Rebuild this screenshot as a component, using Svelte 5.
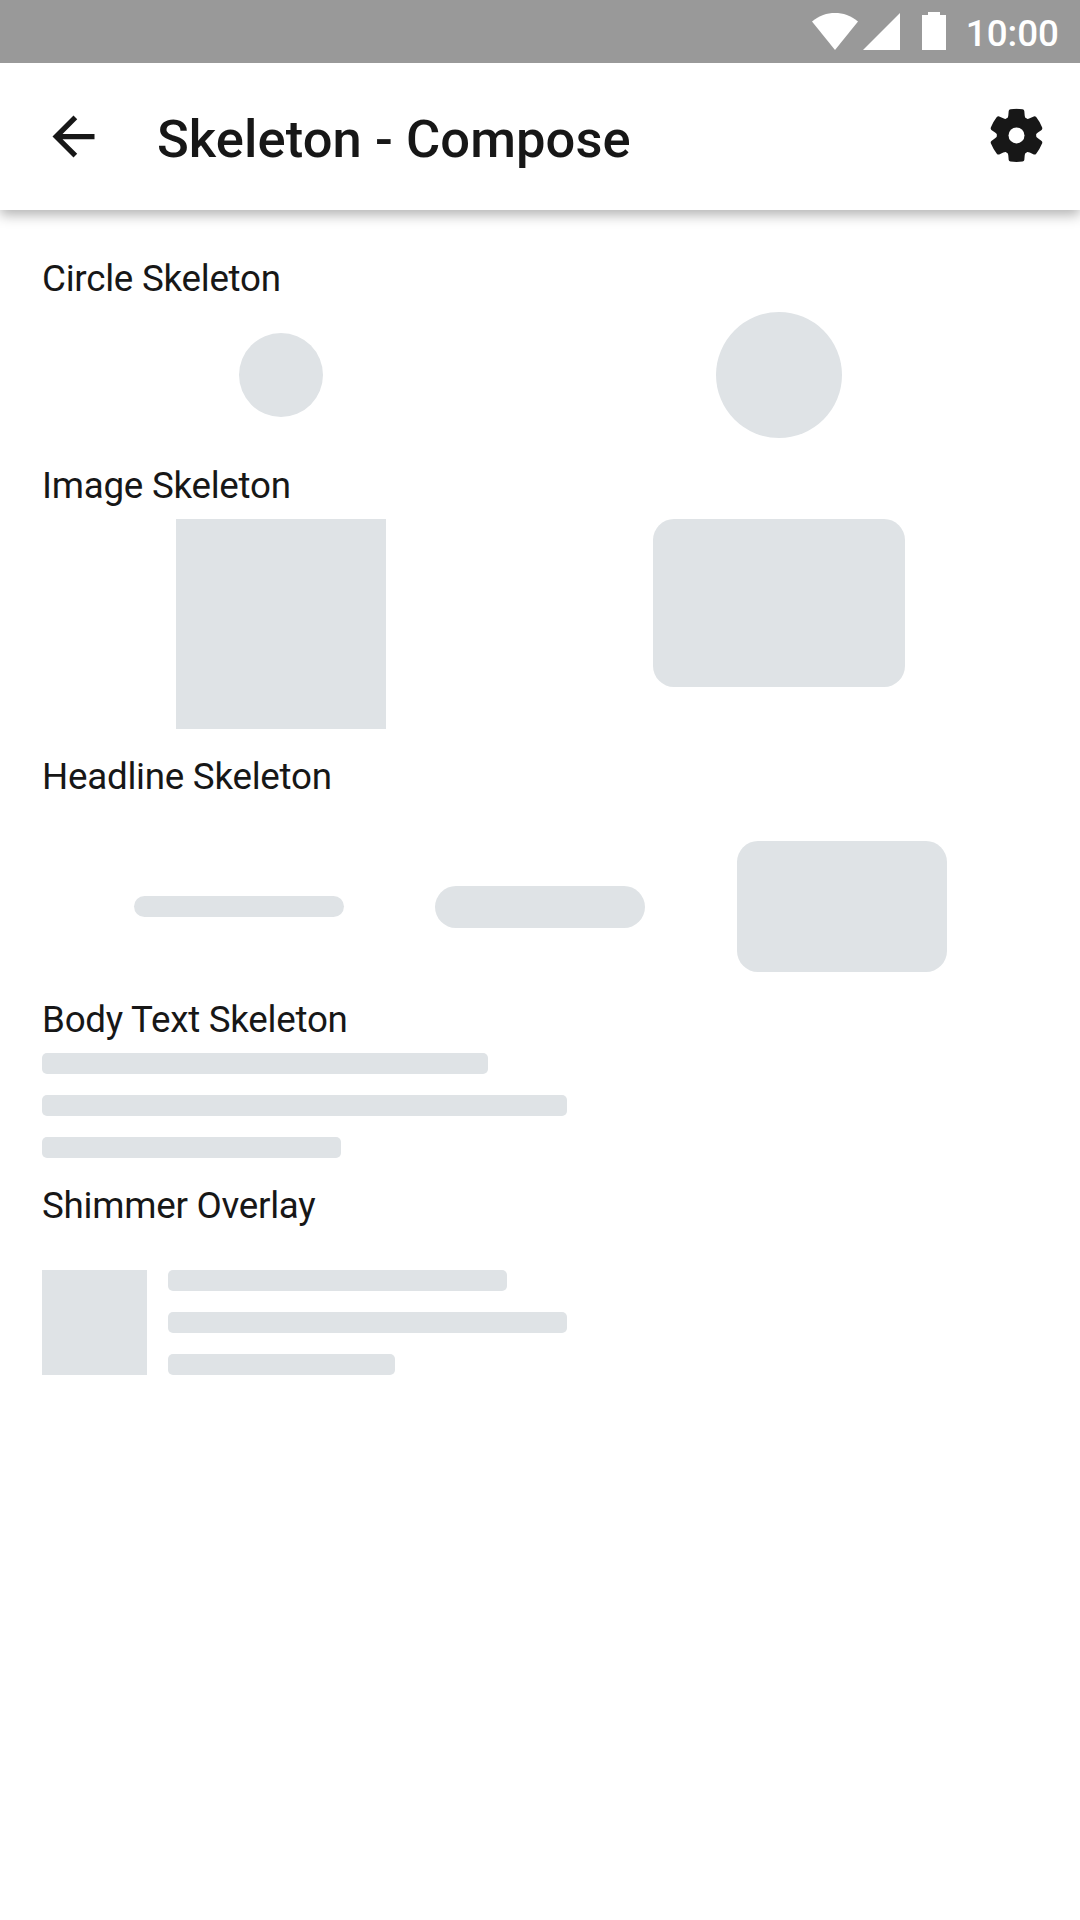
<script>
  const bodyLines = [446, 525, 299];
  const shimmerLines = [339, 399, 227];
</script>

<div class="screen">
  <div class="status">
    <svg class="wifi" viewBox="0 0 46 37"><path d="M0 8.500C7 2.500 15 0 23 0s16 2.500 23 8.500L23 37z" /></svg>
    <svg class="signal" viewBox="0 0 37 37"><path d="M37 0v37H0z" /></svg>
    <svg class="battery" viewBox="0 0 24 38"><path d="M6 0h12v3h6v35H0V3h6z" /></svg>
    <span class="clock">10:00</span>
  </div>

  <header>
    <svg class="back" viewBox="0 0 24 24"><path d="M20 11H7.830l5.590-5.590L12 4l-8 8 8 8 1.410-1.410L7.830 13H20v-2z" /></svg>
    <h1>Skeleton - Compose</h1>
    <svg class="gear" viewBox="-27.500 -27.400 54 54">
      <defs>
        <mask id="hub">
          <rect x="-27" y="-27" width="54" height="54" fill="#fff" />
          <circle r="8" fill="#000" />
        </mask>
      </defs>
      <g mask="url(#hub)">
        <circle r="19.700" />
        {#each [0, 60, 120, 180, 240, 300] as angle}
          <path
            transform="rotate({angle})"
            d="M-12 -15.500Q-8.400 -16.500 -8.200 -20L-7.800 -24.500Q-7.600 -25.900 -6 -26.200Q0 -27 6 -26.200Q7.600 -25.900 7.800 -24.500L8.200 -20Q8.400 -16.500 12 -15.500L0 -5z"
          />
        {/each}
      </g>
    </svg>
  </header>

  <main>
    <h2>Circle Skeleton</h2>
    <div class="row around middle">
      <div class="bone circle small"></div>
      <div class="bone circle large"></div>
    </div>

    <h2>Image Skeleton</h2>
    <div class="row around">
      <div class="bone image"></div>
      <div class="bone image rounded"></div>
    </div>

    <h2>Headline Skeleton</h2>
    <div class="row evenly middle spaced">
      <div class="bone headline thin"></div>
      <div class="bone headline medium"></div>
      <div class="bone headline tall"></div>
    </div>

    <h2>Body Text Skeleton</h2>
    <div class="lines">
      {#each bodyLines as width}
        <div class="bone line" style="width: {width}px"></div>
      {/each}
    </div>

    <h2>Shimmer Overlay</h2>
    <div class="row card spaced">
      <div class="bone thumb"></div>
      <div class="lines">
        {#each shimmerLines as width}
          <div class="bone line" style="width: {width}px"></div>
        {/each}
      </div>
    </div>
  </main>
</div>

<style>
  :global(body) {
    margin: 0;
    background: #fff;
  }
  .screen {
    width: 1080px;
    height: 1920px;
    overflow: hidden;
    background: #fff;
    color: #171717;
    font-family: Roboto, sans-serif;
  }
  svg {
    display: block;
    flex: none;
  }
  .status {
    position: relative;
    z-index: 1;
    display: flex;
    align-items: flex-start;
    justify-content: flex-end;
    box-sizing: border-box;
    height: 63px;
    padding: 12px 21px 0 0;
    background: #999;
    color: #fff;
    fill: #fff;
  }
  .wifi {
    width: 46px;
    height: 37px;
    margin: 1px 5px 0 0;
  }
  .signal {
    width: 37px;
    height: 37px;
    margin: 1px 22px 0 0;
  }
  .battery {
    width: 24px;
    height: 38px;
    margin-right: 20px;
  }
  .clock {
    margin-top: 1px;
    font-size: 36.750px;
    font-weight: 500;
    line-height: 42px;
  }
  header {
    position: relative;
    display: flex;
    align-items: center;
    box-sizing: border-box;
    height: 147px;
    padding: 0 36px 0 42px;
    background: #fff;
    fill: #171717;
    box-shadow: 0 5px 12px rgba(0, 0, 0, 0.300);
  }
  .back {
    width: 63px;
    height: 63px;
  }
  h1 {
    flex: 1;
    margin: 4px 0 0 52px;
    font-size: 52.500px;
    font-weight: 500;
    letter-spacing: 0.080px;
    line-height: 62px;
  }
  .gear {
    width: 54px;
    height: 54px;
    margin: -3px 1px 0 0;
  }
  main {
    padding: 21px 42px 0;
  }
  h2 {
    margin: 0;
    padding: 27px 0 12px;
    font-size: 36.750px;
    font-weight: 400;
    letter-spacing: -0.260px;
    line-height: 42px;
  }
  .row {
    display: flex;
    align-items: flex-start;
  }
  .around {
    justify-content: space-around;
  }
  .evenly {
    justify-content: space-evenly;
  }
  .middle {
    align-items: center;
  }
  .spaced {
    padding-top: 31px;
  }
  .card {
    gap: 21px;
  }
  .bone {
    flex: none;
    background: #dfe3e6;
  }
  .circle {
    border-radius: 50%;
  }
  .small {
    width: 84px;
    height: 84px;
  }
  .large {
    width: 126px;
    height: 126px;
  }
  .image {
    width: 210px;
    height: 210px;
  }
  .rounded {
    width: 252px;
    height: 168px;
    border-radius: 21px;
  }
  .headline {
    width: 210px;
    border-radius: 21px;
  }
  .thin {
    height: 21px;
  }
  .medium {
    height: 42px;
  }
  .tall {
    height: 131px;
  }
  .lines {
    display: flex;
    flex-direction: column;
    gap: 21px;
  }
  .line {
    height: 21px;
    border-radius: 5px;
  }
  .thumb {
    width: 105px;
    height: 105px;
  }
</style>
